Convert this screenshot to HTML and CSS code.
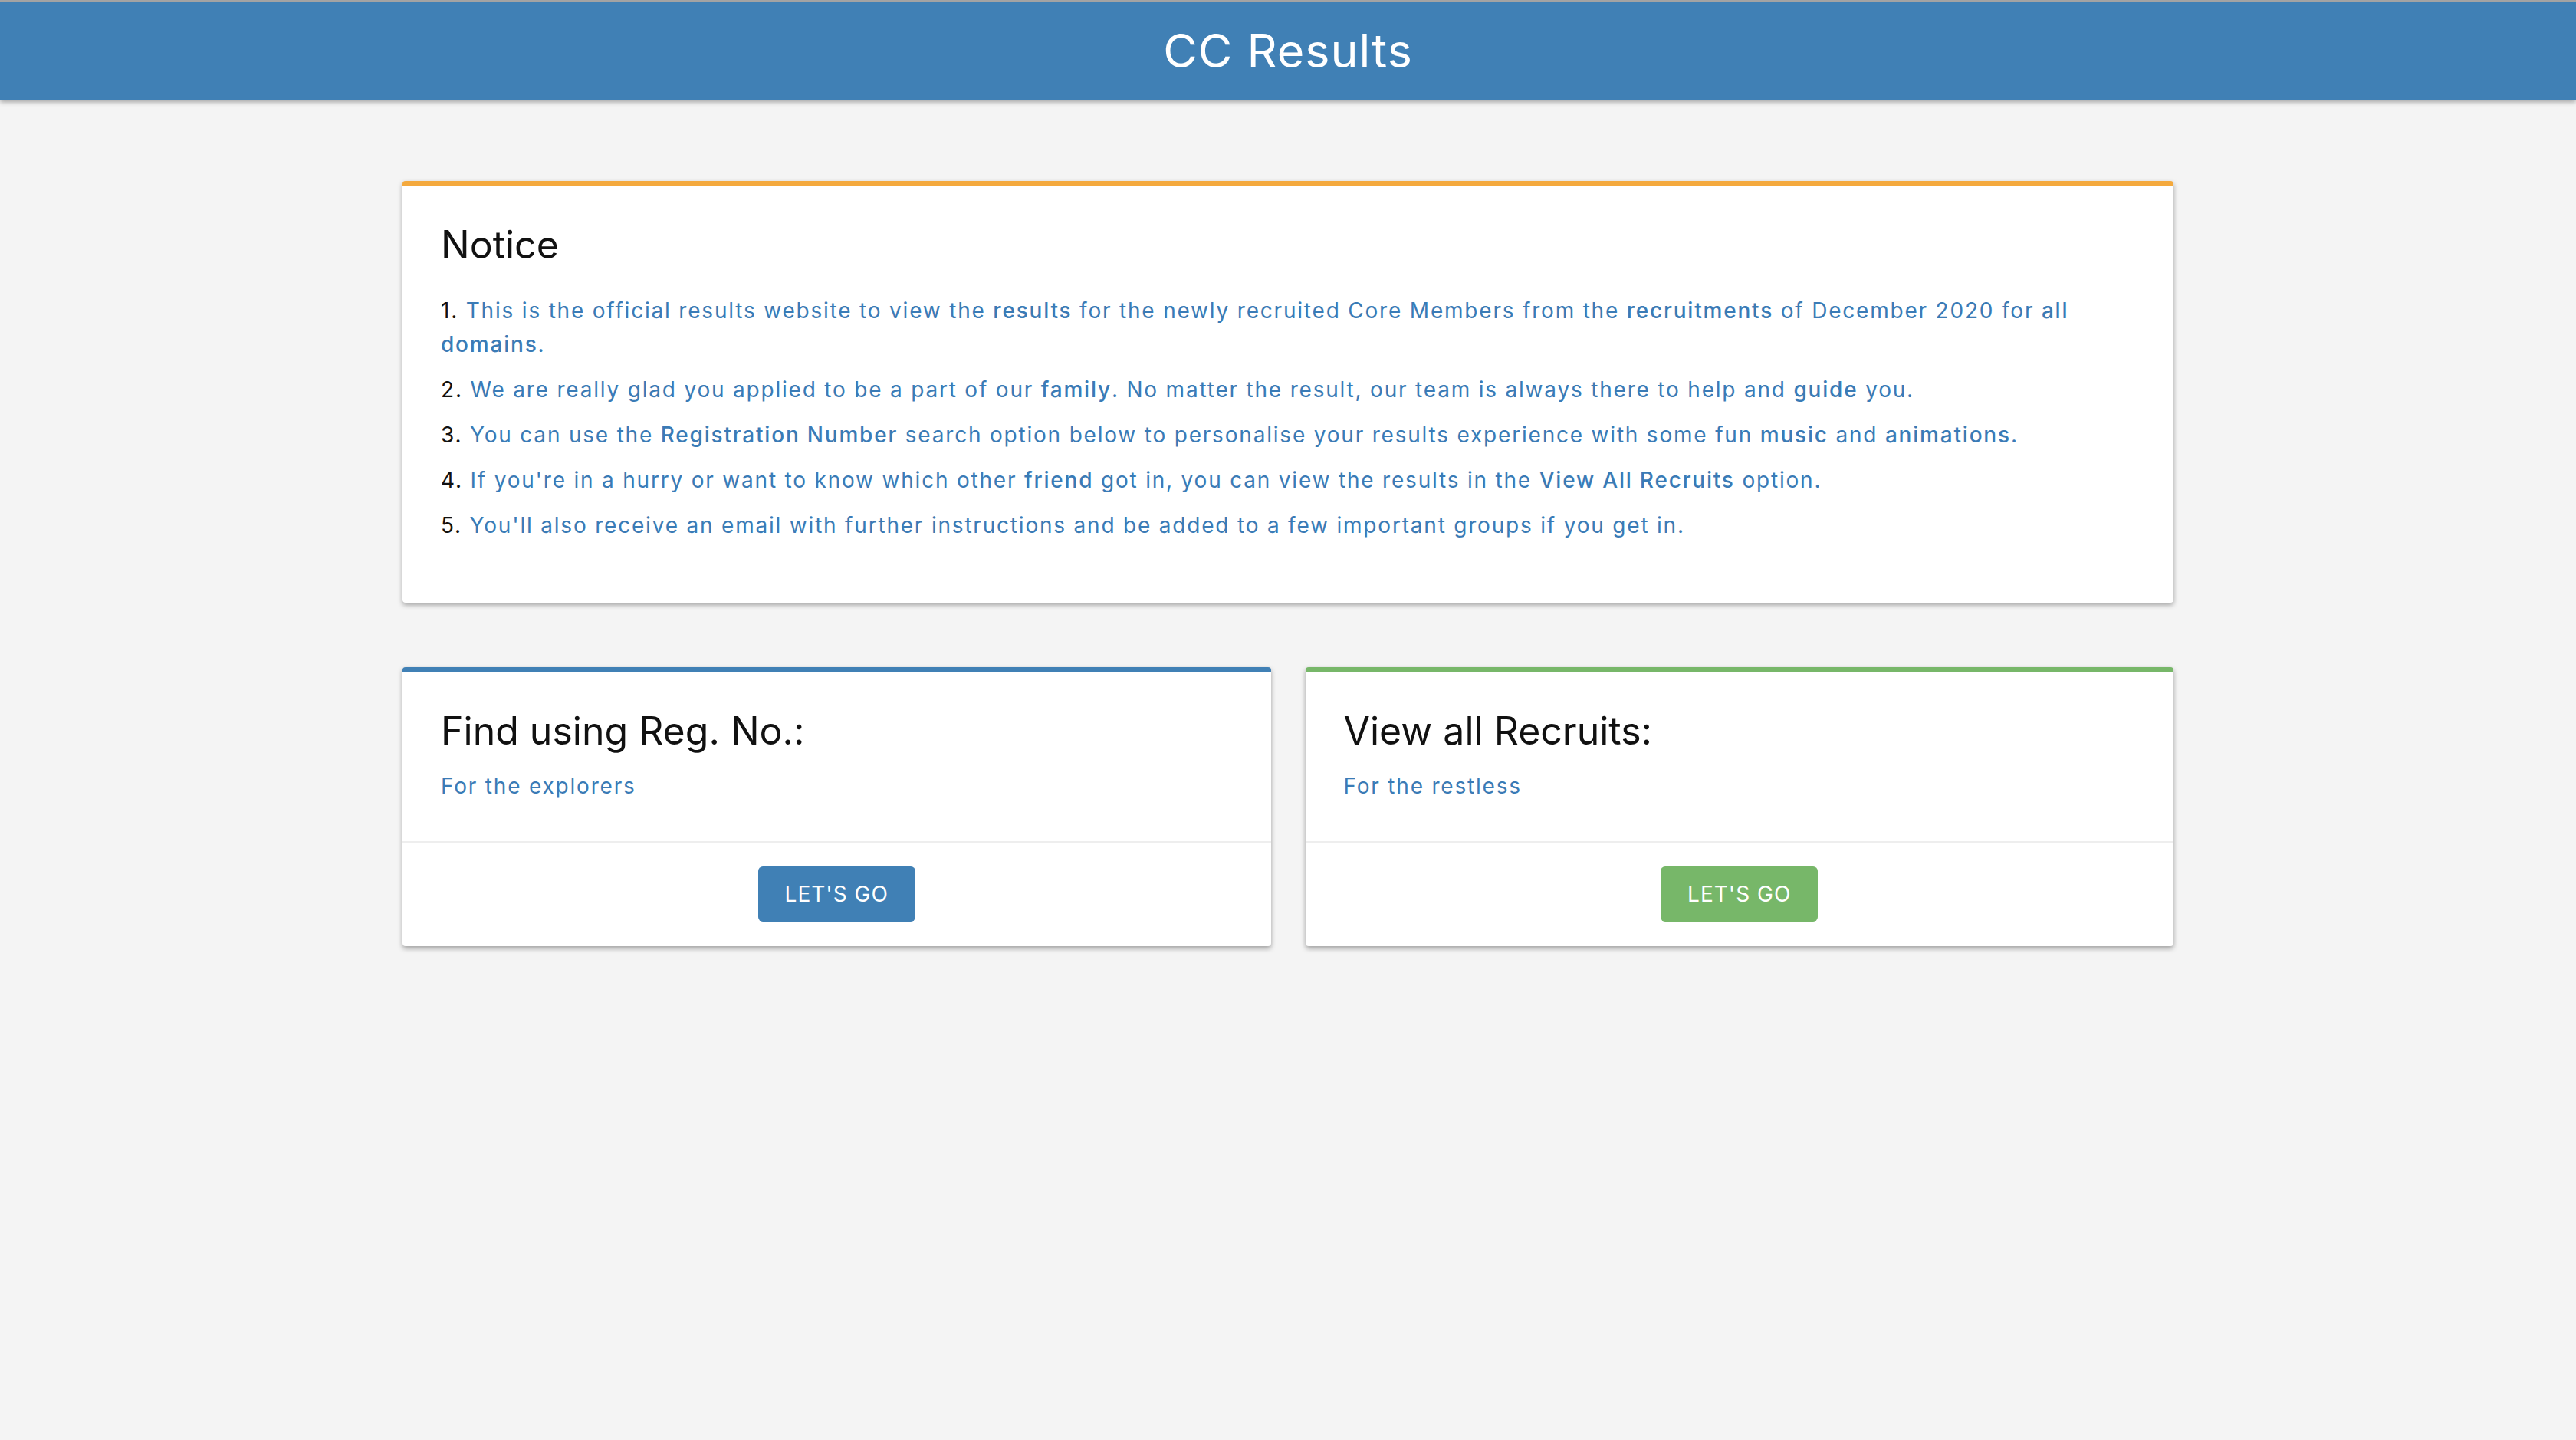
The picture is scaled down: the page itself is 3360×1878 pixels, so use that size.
FILE: index.html
```html
<!DOCTYPE html>
<html lang="en">
<head>
    <meta charset="UTF-8">
    <meta name="viewport" content="width=device-width, initial-scale=1.0">
    <title>CC Results</title>
    <link rel="stylesheet" href="styles.css">
</head>
<body>
    <header class="topbar">
        <h1>CC Results</h1>
    </header>

    <div class="container">
        <div class="card card-notice">
            <div class="card-body">
                <h3>Notice</h3>
                <p class="info"><span class="num">1.</span> This is the official results website to view the <b>results</b> for the newly recruited Core Members from the <b>recruitments</b> of December 2020 for <b>all domains</b>.</p>
                <p class="info"><span class="num">2.</span> We are really glad you applied to be a part of our <b>family</b>. No matter the result, our team is always there to help and <b>guide</b> you.</p>
                <p class="info"><span class="num">3.</span> You can use the <b>Registration Number</b> search option below to personalise your results experience with some fun <b>music</b> and <b>animations</b>.</p>
                <p class="info"><span class="num">4.</span> If you're in a hurry or want to know which other <b>friend</b> got in, you can view the results in the <b>View All Recruits</b> option.</p>
                <p class="info"><span class="num">5.</span> You'll also receive an email with further instructions and be added to a few important groups if you get in.</p>
            </div>
        </div>

        <div class="options">
            <div class="card card-reg">
                <div class="card-body">
                    <h3>Find using Reg. No.:</h3>
                    <p class="info">For the explorers</p>
                </div>
                <div class="card-footer">
                    <button class="btn btn-blue">LET'S GO</button>
                </div>
            </div>
            <div class="card card-all">
                <div class="card-body">
                    <h3>View all Recruits:</h3>
                    <p class="info">For the restless</p>
                </div>
                <div class="card-footer">
                    <button class="btn btn-green">LET'S GO</button>
                </div>
            </div>
        </div>
    </div>
</body>
</html>
```

FILE: styles.css
```css
body {
    margin: 0;
    font-family: Inter, "Noto Sans", sans-serif;
    background-color: #f4f4f4;
    color: #111;
}
.topbar {
    height: 128px;
    border-top: 2px solid #a3a3a3;
    background-color: #4080b5;
    box-shadow: 0 3px 6px rgba(0,0,0,0.35);
    display: flex;
    align-items: center;
    justify-content: center;
}
.topbar h1 {
    margin: 0;
    color: white;
    font-size: 61px;
    font-weight: 400;
    letter-spacing: 1px;
}
.container {
    width: 2310px;
    margin: 106px auto 0;
    padding-bottom: 60px;
}
.card {
    background-color: white;
    border-top: 6px solid #f4a93d;
    border-radius: 4px;
    box-shadow: 0 3px 6px rgba(0,0,0,0.35);
}
.card-reg {
    border-top-color: #4080b5;
}
.card-all {
    border-top-color: #77b769;
}
.card-body {
    padding: 50px 50px 0;
}
.card h3 {
    margin: 0;
    font-size: 50px;
    line-height: 55px;
    font-weight: 400;
}
.card p {
    margin: 0 0 15px;
    font-size: 28px;
    line-height: 44px;
    letter-spacing: 1.8px;
}
.card-notice h3 {
    margin-bottom: 36px;
}
.card-notice .card-body {
    padding-bottom: 64px;
}
.info {
    color: #3a7bb6;
}
.info b {
    font-weight: 500;
}
.info .num {
    color: #111;
}
.card-reg h3, .card-all h3 {
    margin-bottom: 22px;
}
.card-reg p, .card-all p {
    margin: 0;
    padding-bottom: 50px;
}
.options {
    display: grid;
    grid-template-columns: 1fr 1fr;
    gap: 45px;
    margin-top: 84px;
}
.card-footer {
    border-top: 2px solid #eeeeee;
    padding: 31px 0 32px;
    text-align: center;
}
.btn {
    height: 72px;
    padding: 0 35px;
    border: none;
    border-radius: 6px;
    color: white;
    font-family: Inter, "Noto Sans", sans-serif;
    font-size: 28px;
    letter-spacing: 1px;
    cursor: pointer;
}
.btn-blue {
    background-color: #4080b5;
}
.btn-green {
    background-color: #77b769;
}
```
